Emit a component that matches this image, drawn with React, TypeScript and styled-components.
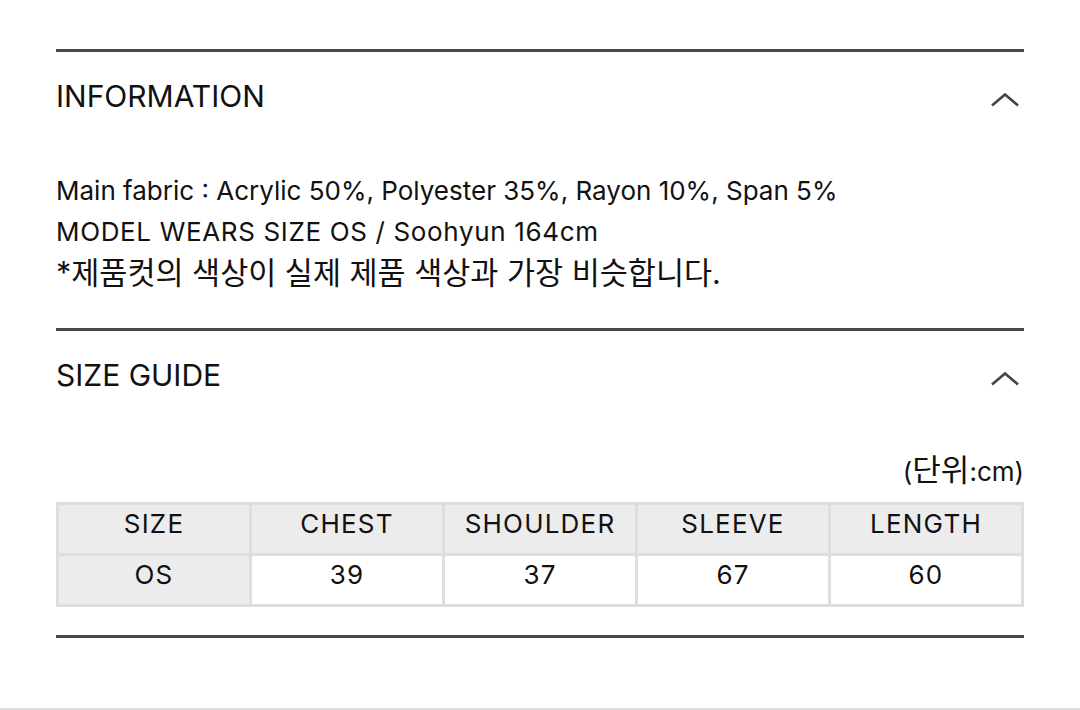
import styled, { createGlobalStyle } from "styled-components";

const GlobalStyle = createGlobalStyle`
  html, body {
    margin: 0;
    padding: 0;
    background: #ffffff;
  }
  body {
    font-family: Inter, "Noto Sans CJK KR", sans-serif;
    color: #111111;
  }
`;

const Page = styled.div`
  width: 1080px;
  height: 710px;
  box-sizing: border-box;
  padding: 49px 56px 0;
  border-bottom: 2px solid #dddddd;
`;

const Section = styled.section`
  border-top: 3px solid #4a4a4a;
`;

const Header = styled.div`
  height: 88px;
  display: flex;
  align-items: center;
  justify-content: space-between;
`;

const Title = styled.h2`
  margin: 0;
  font-size: 30px;
  font-weight: 400;
  color: #111111;
`;

const Chevron = styled.svg`
  width: 30px;
  height: 14px;
  margin-right: 4px;
  margin-top: 8px;
`;

const Body = styled.div<{ $bottom?: number }>`
  padding: 30px 0 ${p => p.$bottom ?? 35}px;
  font-size: 26px;
  line-height: 41px;
`;

const Line = styled.div<{ $size?: number; $spacing?: number }>`
  height: 41px;
  font-size: ${p => p.$size ?? 26}px;
  letter-spacing: ${p => p.$spacing ?? 0}px;
`;

const Korean = styled.span`
  font-size: 31px;
`;

const Unit = styled.div`
  height: 41px;
  text-align: right;
  margin-bottom: 12px;
`;

const Table = styled.table`
  width: 100%;
  border-collapse: collapse;
  table-layout: fixed;
  border: 2px solid #dedede;
`;

const Cell = styled.td<{ $gray?: boolean }>`
  height: 38px;
  padding: 0 0 10px;
  text-align: center;
  font-size: 26px;
  font-weight: 400;
  letter-spacing: 1.2px;
  line-height: 1;
  color: #111111;
  border: 3px solid #dedede;
  background: ${p => (p.$gray ? "#ececec" : "#ffffff")};
`;

function Arrow() {
  return (
    <Chevron viewBox="0 0 30 14">
      <polyline points="2,12.5 15,1.5 28,12.5" fill="none" stroke="#444" strokeWidth="2.6" />
    </Chevron>
  );
}

const heads = ["SIZE", "CHEST", "SHOULDER", "SLEEVE", "LENGTH"];
const values = ["OS", "39", "37", "67", "60"];

export default function App() {
  return (
    <Page>
      <GlobalStyle />
      <Section>
        <Header>
          <Title>INFORMATION</Title>
          <Arrow />
        </Header>
        <Body>
          <Line>Main fabric : Acrylic 50%, Polyester 35%, Rayon 10%, Span 5%</Line>
          <Line $spacing={0.65}>MODEL WEARS SIZE OS / Soohyun 164cm</Line>
          <Line $size={30.5}>*제품컷의 색상이 실제 제품 색상과 가장 비슷합니다.</Line>
        </Body>
      </Section>
      <Section>
        <Header>
          <Title>SIZE GUIDE</Title>
          <Arrow />
        </Header>
        <Body $bottom={28}>
          <Unit>(<Korean>단위</Korean>:cm)</Unit>
          <Table>
            <tbody>
              <tr>
                {heads.map(h => (
                  <Cell as="th" key={h} $gray>{h}</Cell>
                ))}
              </tr>
              <tr>
                {values.map((v, i) => (
                  <Cell key={i} $gray={i === 0}>{v}</Cell>
                ))}
              </tr>
            </tbody>
          </Table>
        </Body>
      </Section>
      <Section />
    </Page>
  );
}
